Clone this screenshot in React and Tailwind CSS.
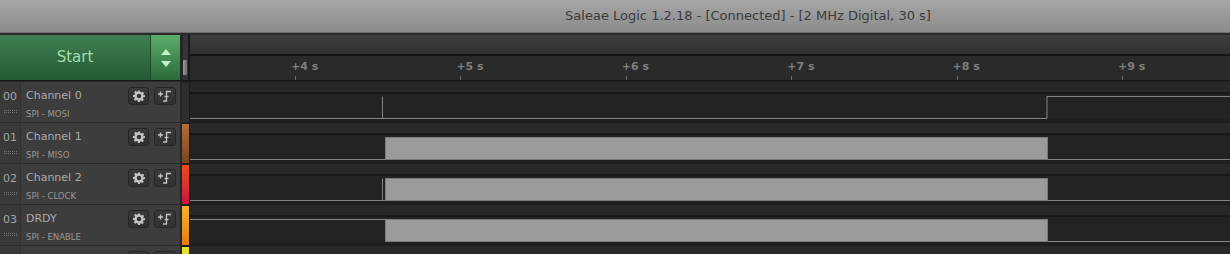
import React from 'react';

const channels = [
  { num: '00', name: 'Channel 0', sub: 'SPI - MOSI', strip: 'bg-[#2e2e2e]', wave: 'mosi' },
  { num: '01', name: 'Channel 1', sub: 'SPI - MISO', strip: 'bg-gradient-to-b from-[#b0703c] to-[#7a431f]', wave: 'miso' },
  { num: '02', name: 'Channel 2', sub: 'SPI - CLOCK', strip: 'bg-gradient-to-b from-[#ec4a18] to-[#c8103e]', wave: 'clock' },
  { num: '03', name: 'DRDY', sub: 'SPI - ENABLE', strip: 'bg-gradient-to-b from-[#f2b42a] to-[#e67c10]', wave: 'enable' },
  { num: '', name: '', sub: '', strip: 'bg-[#e6e030]', wave: 'none' },
];

const ticks = ['+4 s', '+5 s', '+6 s', '+7 s', '+8 s', '+9 s'];

function Gear() {
  return (
    <svg width="12" height="12" viewBox="0 0 24 24" fill="#c4c4c4">
      <path d="M10 1h4l.6 3.2 2.2 1 2.7-1.9 2.8 2.8-1.9 2.7 1 2.2L24 10v4l-3.2.6-1 2.2 1.9 2.7-2.8 2.8-2.7-1.9-2.2 1L14 24h-4l-.6-3.2-2.2-1-2.7 1.9-2.8-2.8 1.9-2.7-1-2.2L0 14v-4l3.2-.6 1-2.2-1.9-2.7 2.8-2.8 2.7 1.9 2.2-1z M12 7.5a4.5 4.5 0 1 0 0 9a4.5 4.5 0 1 0 0-9z" fillRule="evenodd" />
    </svg>
  );
}

function Trigger() {
  return (
    <svg width="16" height="12" viewBox="0 0 16 12" fill="none" stroke="#c4c4c4" strokeWidth="1.3">
      <path d="M1 4h5M3.5 1.5v5" />
      <path d="M6 11h3.5V1.5H14" />
      <path d="M7.5 6.5h4" />
    </svg>
  );
}

function Wave({ type }) {
  const L = 24.5, H = 2.5, A = 195, B = 857;
  const line = '#858585';
  return (
    <svg width="1040" height="25" className="block">
      {type === 'mosi' && (
        <path d={`M0 ${L}H${B}V${H}H1040 M192.5 ${L}V${H}`} stroke={line} strokeWidth="1" fill="none" />
      )}
      {(type === 'miso' || type === 'clock') && (
        <path d={`M0 ${L}H${A} M${B} ${L}H1040`} stroke={line} strokeWidth="1" fill="none" />
      )}
      {type === 'clock' && <path d={`M192.5 ${L}V${H}`} stroke={line} strokeWidth="1" />}
      {type === 'enable' && (
        <path d={`M0 ${H}H${A} M${B} ${L}H1040`} stroke={line} strokeWidth="1" fill="none" />
      )}
      {type !== 'mosi' && type !== 'none' && (
        <rect x={A + 0.5} y={H} width={B - A} height={L - H} fill="#9b9b9b" stroke="#7a7a7a" strokeWidth="1" />
      )}
    </svg>
  );
}

function Grip() {
  return (
    <div className="flex flex-col gap-[1px]">
      {[0, 1].map((r) => (
        <div key={r} className="flex gap-[1px]">
          {[0, 1, 2, 3, 4, 5, 6].map((c) => (
            <div key={c} className="w-[1px] h-[1px] bg-[#707070]" />
          ))}
        </div>
      ))}
    </div>
  );
}

function ChannelRow({ ch }) {
  return (
    <div className="flex h-[41px] shrink-0">
      <div className="w-[180px] flex border-t border-[#2a2a2a] bg-[#3d3d3d]">
        <div className="w-[21px] flex flex-col items-center pt-[8px] border-r border-[#303030] bg-[#393939]">
          {ch.num && (
            <>
              <span className="text-[11px] leading-[14px] text-[#a4a4a4]">{ch.num}</span>
              <div className="mt-[6px]"><Grip /></div>
            </>
          )}
        </div>
        <div className="flex-1 flex pl-[5px] pr-[4px] pt-[5px]">
          <div className="flex-1 flex flex-col pt-[1px]">
            {ch.name && (
              <>
                <span className="text-[11px] leading-[16px] text-[#ababab]">{ch.name}</span>
                <span className="text-[8.5px] leading-[12px] text-[#979797] mt-[4px]">{ch.sub}</span>
              </>
            )}
          </div>
          <div className="flex gap-[5px]">
            <button className="w-[21px] h-[18px] rounded-[3px] border border-[#262626] bg-gradient-to-b from-[#3a3a3a] to-[#303030] flex items-center justify-center">
              <Gear />
            </button>
            <button className="w-[22px] h-[18px] rounded-[3px] border border-[#262626] bg-gradient-to-b from-[#3a3a3a] to-[#303030] flex items-center justify-center">
              <Trigger />
            </button>
          </div>
        </div>
      </div>
      <div className="w-[2px] bg-[#262626]" />
      <div className={`w-[7px] border-t-2 border-[#1f1f1f] ${ch.strip}`} />
      <div className="w-[1px] bg-[#1a1a1a]" />
      <div className="flex-1 flex flex-col bg-[#1e1e1e] pt-[1px]">
        <div className="h-[10px] bg-[#282828]" />
        <div className="h-[2px] bg-[#171717]" />
        <div className="h-[25px] bg-[#232323]">
          <Wave type={ch.wave} />
        </div>
      </div>
    </div>
  );
}

export default function App() {
  return (
    <div className="w-[1230px] h-[254px] overflow-hidden bg-[#222] flex flex-col" style={{ fontFamily: '"DejaVu Sans", sans-serif' }}>
      <div className="h-[33px] shrink-0 bg-gradient-to-b from-[#a6a6a6] to-[#8b8b8b] flex items-center justify-center pl-[266px] border-b border-[#6e6e6e]">
        <span className="text-[13px] text-[#3b3b3b]">Saleae Logic 1.2.18 - [Connected] - [2 MHz Digital, 30 s]</span>
      </div>
      <div className="h-[2px] shrink-0 bg-[#2b2b2b]" />
      <div className="flex h-[46px] shrink-0 border-b border-[#161616]">
        <div className="w-[151px] bg-gradient-to-b from-[#3f7f51] to-[#245a35] flex items-center justify-center border-r border-[#1d4a2a]">
          <span className="text-[15px] text-[#a2dca4]">Start</span>
        </div>
        <div className="w-[29px] bg-gradient-to-b from-[#5cae6c] to-[#2c6a3c] flex flex-col items-center justify-center gap-[6px]">
          <svg width="10" height="6" viewBox="0 0 10 6"><path d="M5 0L10 6H0z" fill="#c8f0c8" /></svg>
          <svg width="10" height="6" viewBox="0 0 10 6"><path d="M0 0H10L5 6z" fill="#c8f0c8" /></svg>
        </div>
        <div className="w-[3px] bg-[#262626]" />
        <div className="w-[5px] bg-[#353535] flex flex-col">
          <div className="h-[25px]" />
          <div className="h-[15px] w-[4px] rounded-[1px] bg-gradient-to-r from-[#9a9a9a] to-[#6e6e6e]" />
        </div>
        <div className="w-[2px] bg-[#1a1a1a]" />
        <div className="flex-1 flex flex-col">
          <div className="h-[19px] bg-gradient-to-b from-[#3c3c3c] to-[#323232]" />
          <div className="h-[2px] bg-[#141414]" />
          <div className="flex-1 bg-[#2a2a2a] relative">
            {ticks.map((t, i) => (
              <div key={t} className="absolute top-0 h-full flex flex-col" style={{ left: 105 + i * 165.4 - 4 }}>
                <span className="text-[11px] font-bold leading-[14px] mt-[4px] text-[#7e7e7e] whitespace-nowrap">{t}</span>
                <div className="w-[1px] h-[6px] ml-[4px] mt-[2px] bg-[#6a6a6a]" />
              </div>
            ))}
          </div>
        </div>
      </div>
      {channels.map((ch, i) => (
        <ChannelRow key={i} ch={ch} />
      ))}
    </div>
  );
}
